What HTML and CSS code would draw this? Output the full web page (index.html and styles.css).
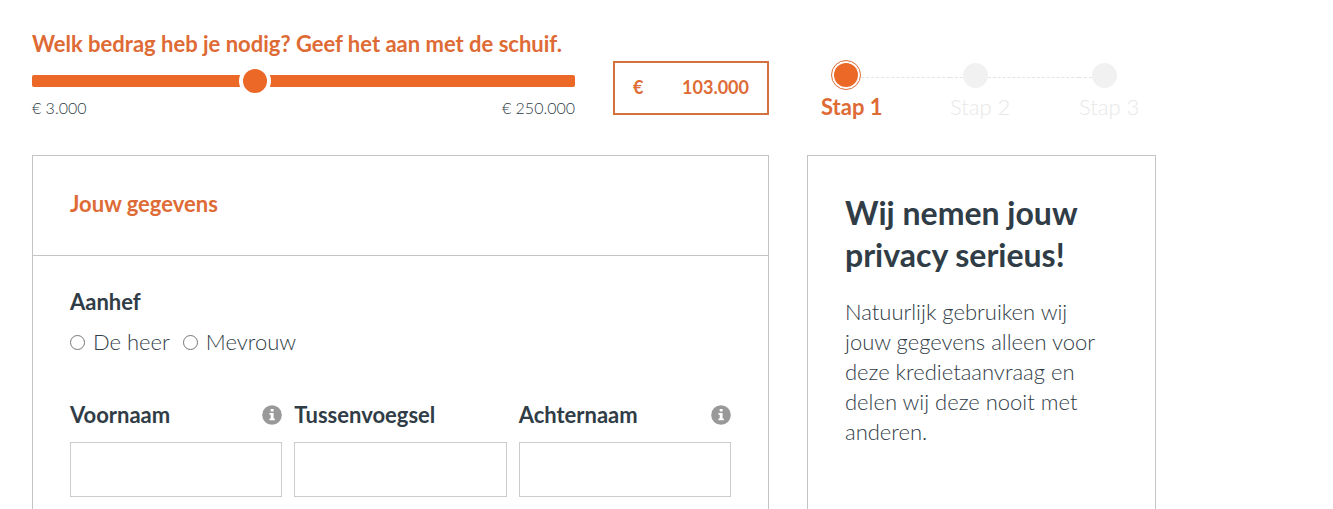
FILE: index.html
```html
<!DOCTYPE html>
<html lang="nl">
<head>
    <meta charset="UTF-8">
    <meta name="viewport" content="width=device-width, initial-scale=1.0">
    <title>Krediet aanvragen</title>
    <link rel="stylesheet" href="styles.css">
</head>
<body>
    <form class="page">
        <div class="top">
            <div class="amount">
                <div class="amount-slider">
                    <label class="amount-label" for="bedrag">Welk bedrag heb je nodig? Geef het aan met de schuif.</label>
                    <input class="slider" type="range" id="bedrag" name="bedrag" min="3000" max="250000" step="1000" value="103000">
                    <div class="slider-range">
                        <span>€ 3.000</span>
                        <span>€ 250.000</span>
                    </div>
                </div>
                <div class="amount-box">
                    <label for="bedrag_tekst">€</label>
                    <input type="text" id="bedrag_tekst" name="bedrag_tekst" value="103.000">
                </div>
            </div>

            <ol class="steps">
                <li class="step active">
                    <div class="step-marker"><span class="step-dot"></span></div>
                    Stap 1
                </li>
                <li class="step">
                    <div class="step-marker"><span class="step-dot"></span></div>
                    Stap 2
                </li>
                <li class="step">
                    <div class="step-marker"><span class="step-dot"></span></div>
                    Stap 3
                </li>
            </ol>
        </div>

        <div class="content">
            <section class="panel">
                <h2 class="panel-title">Jouw gegevens</h2>
                <div class="panel-body">
                    <fieldset class="salutation">
                        <legend>Aanhef</legend>
                        <div class="radios">
                            <label><input type="radio" name="aanhef" value="heer">De heer</label>
                            <label><input type="radio" name="aanhef" value="mevrouw">Mevrouw</label>
                        </div>
                    </fieldset>

                    <div class="fields">
                        <div class="field">
                            <div class="field-head">
                                <label for="voornaam">Voornaam</label>
                                <svg class="info" viewBox="0 0 20 20" aria-hidden="true">
                                    <circle cx="10" cy="10" r="9.8" fill="#999"/>
                                    <path d="M8.7 4h2.9v2.5H8.7zM7.5 8h4.1v5.4h1.2v1.8H7.5v-1.8h1.2V9.8H7.5z" fill="#fff"/>
                                </svg>
                            </div>
                            <input type="text" id="voornaam" name="voornaam">
                        </div>
                        <div class="field">
                            <div class="field-head">
                                <label for="tussenvoegsel">Tussenvoegsel</label>
                            </div>
                            <input type="text" id="tussenvoegsel" name="tussenvoegsel">
                        </div>
                        <div class="field">
                            <div class="field-head">
                                <label for="achternaam">Achternaam</label>
                                <svg class="info" viewBox="0 0 20 20" aria-hidden="true">
                                    <circle cx="10" cy="10" r="9.8" fill="#999"/>
                                    <path d="M8.7 4h2.9v2.5H8.7zM7.5 8h4.1v5.4h1.2v1.8H7.5v-1.8h1.2V9.8H7.5z" fill="#fff"/>
                                </svg>
                            </div>
                            <input type="text" id="achternaam" name="achternaam">
                        </div>
                    </div>
                </div>
            </section>

            <aside class="panel privacy">
                <h2>Wij nemen jouw privacy serieus!</h2>
                <p>Natuurlijk gebruiken wij jouw gegevens alleen voor deze kredietaanvraag en delen wij deze nooit met anderen.</p>
            </aside>
        </div>
    </form>
</body>
</html>
```
FILE: styles.css
```css
* {
    box-sizing: border-box;
}

body {
    margin: 0;
    font-family: Lato, "Open Sans", sans-serif;
    font-size: 22px;
    font-weight: 300;
    line-height: 30px;
    color: #303c46;
    background-color: #fff;
}

.page {
    display: flex;
    flex-direction: column;
    min-height: 100vh;
    max-width: 1188px;
    padding: 29px 32px 0;
}

.top, .content {
    display: grid;
    grid-template-columns: 737fr 349fr;
    column-gap: 38px;
}

.content {
    flex: 1;
    margin-top: 34px;
}

/* Bedrag */
.amount {
    display: flex;
    gap: 38px;
}

.amount-slider {
    flex: 1;
}

.amount-label {
    display: block;
    font-weight: 700;
    color: #de6b35;
}

.slider {
    -webkit-appearance: none;
    appearance: none;
    display: block;
    width: 100%;
    height: 32px;
    margin: 6px 0 0;
    background: none;
}

.slider::-webkit-slider-runnable-track {
    height: 12px;
    background-color: #ec6827;
    border-radius: 2px;
}

.slider::-webkit-slider-thumb {
    -webkit-appearance: none;
    width: 32px;
    height: 32px;
    margin-top: -10px;
    background-color: #ec6827;
    border: 4px solid #fff;
    border-radius: 50%;
}

.slider-range {
    display: flex;
    justify-content: space-between;
    font-size: 16px;
    line-height: 22px;
}

.amount-box {
    display: flex;
    align-items: center;
    width: 156px;
    height: 54px;
    margin-top: 32px;
    padding: 0 18px 2px;
    border: 2px solid #d5703f;
    font-size: 18px;
    font-weight: 700;
    color: #de6b35;
}

.amount-box input {
    flex: 1;
    min-width: 0;
    padding: 0;
    border: 0;
    font: inherit;
    color: inherit;
    text-align: right;
    outline: none;
}

/* Stappen */
.steps {
    display: flex;
    margin: 31px 0 0;
    padding: 0 0 0 14px;
    list-style: none;
}

.step {
    width: 129px;
    line-height: 28px;
    color: #e8e8e8;
}

.step:last-child {
    width: auto;
}

.step-marker {
    display: flex;
    align-items: center;
    height: 30px;
    margin-bottom: 3px;
}

.step-marker::before, .step-marker::after {
    content: "";
    height: 4px;
    border-bottom: 1px dashed #e4e4e4;
}

.step-marker::before {
    width: 13px;
}

.step-marker::after {
    flex: 1;
}

.step:first-child .step-marker::before, .step:last-child .step-marker::after {
    border: 0;
}

.step-dot {
    width: 25px;
    height: 25px;
    background-color: #f1f1f1;
    border-radius: 50%;
}

.step.active {
    font-weight: 700;
    color: #de6b35;
}

.active .step-marker::before {
    width: 10px;
}

.active .step-dot {
    width: 30px;
    height: 30px;
    border: 1px solid #dd6b36;
    padding: 2px;
    background-color: #ec6827;
    background-clip: content-box;
}

/* Panelen */
.panel {
    border: 1px solid #c4c4c4;
    border-bottom: 0;
}

.panel-title {
    margin: 0;
    padding: 33px 37px 36px;
    border-bottom: 1px solid #c4c4c4;
    font-size: 22px;
    font-weight: 700;
    color: #de6b35;
}

.panel-body {
    padding: 31px 37px 12px;
}

.salutation {
    margin: 0;
    padding: 0;
    border: 0;
}

.salutation legend {
    padding: 0;
    font-weight: 700;
}

.radios {
    display: flex;
    gap: 13px;
    margin-top: 10px;
}

.radios label {
    display: flex;
    align-items: center;
    gap: 8px;
}

.radios input {
    width: 15px;
    height: 15px;
    margin: 0;
}

.fields {
    display: grid;
    grid-template-columns: repeat(3, 1fr);
    gap: 12px;
    margin-top: 43px;
}

.field-head {
    display: flex;
    justify-content: space-between;
    align-items: center;
    font-weight: 700;
}

.info {
    width: 20px;
    height: 20px;
}

.field input {
    display: block;
    width: 100%;
    height: 55px;
    margin-top: 12px;
    padding: 0 16px;
    border: 1px solid #ccc;
    font: inherit;
    color: inherit;
}

.privacy {
    padding: 36px 37px;
}

.privacy h2 {
    margin: 0 0 21px;
    font-size: 32px;
    font-weight: 700;
    line-height: 42px;
}

.privacy p {
    margin: 0;
}
```
